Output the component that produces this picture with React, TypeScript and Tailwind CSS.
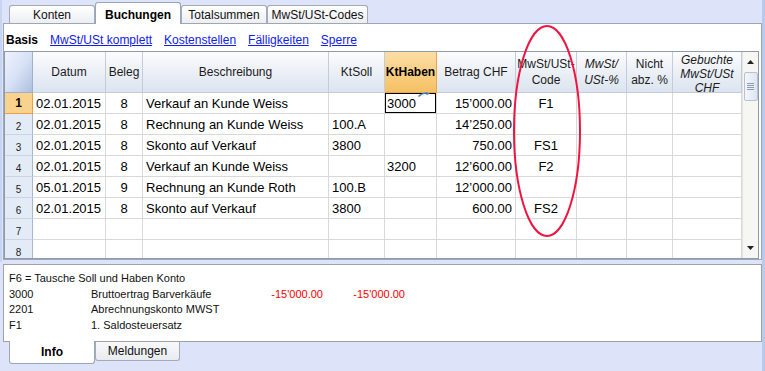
import React from 'react';

interface Row {
  n: number;
  datum: string;
  beleg: string;
  text: string;
  soll: string;
  haben: string;
  betrag: string;
  code: string;
}

const rows: Row[] = [
  { n: 1, datum: '02.01.2015', beleg: '8', text: 'Verkauf an Kunde Weiss', soll: '', haben: '3000', betrag: '15\u2019000.00', code: 'F1' },
  { n: 2, datum: '02.01.2015', beleg: '8', text: 'Rechnung an Kunde Weiss', soll: '100.A', haben: '', betrag: '14\u2019250.00', code: '' },
  { n: 3, datum: '02.01.2015', beleg: '8', text: 'Skonto auf Verkauf', soll: '3800', haben: '', betrag: '750.00', code: 'FS1' },
  { n: 4, datum: '02.01.2015', beleg: '8', text: 'Verkauf an Kunde Weiss', soll: '', haben: '3200', betrag: '12\u2019600.00', code: 'F2' },
  { n: 5, datum: '05.01.2015', beleg: '9', text: 'Rechnung an Kunde Roth', soll: '100.B', haben: '', betrag: '12\u2019000.00', code: '' },
  { n: 6, datum: '02.01.2015', beleg: '8', text: 'Skonto auf Verkauf', soll: '3800', haben: '', betrag: '600.00', code: 'FS2' },
  { n: 7, datum: '', beleg: '', text: '', soll: '', haben: '', betrag: '', code: '' },
  { n: 8, datum: '', beleg: '', text: '', soll: '', haben: '', betrag: '', code: '' },
];

const cell = 'h-[21px] border-r border-b border-[#d9d9d9] flex items-center text-[13px] leading-none whitespace-nowrap overflow-hidden text-black';
const head = 'h-[41px] border-r border-b border-[#c4ccd9] bg-gradient-to-b from-[#fbfcfe] to-[#dce4ef] flex items-center justify-center text-center text-[12px] leading-[16px] text-[#1b1b1b] overflow-hidden';

const TopTab: React.FC<{ label: string; active?: boolean; w: string }> = ({ label, active, w }) =>
  active ? (
    <div className={`${w} h-[22px] -mb-px relative z-10 border border-b-0 border-[#9aa5b5] rounded-t-[3px] bg-gradient-to-b from-[#fdfdfd] to-white flex items-center justify-center pt-[2px] text-[12px] font-bold`}>
      {label}
    </div>
  ) : (
    <div className={`${w} h-[18px] border border-b-0 border-[#a3abb8] rounded-t-[3px] bg-gradient-to-b from-white to-[#eceef2] flex items-center justify-center text-[12px] text-[#111]`}>
      {label}
    </div>
  );

const Scrollbar: React.FC = () => (
  <div className="w-[16px] bg-[#f6f6f3] border-l border-[#e4e4e0] flex flex-col items-center">
    <div className="h-[18px] w-full flex items-center justify-center pt-[2px]">
      <svg width="7" height="4" viewBox="0 0 7 4"><path d="M0 4 L3.5 0 L7 4 Z" fill="#222" /></svg>
    </div>
    <div className="w-[14px] h-[29px] mt-[2px] rounded-[2px] border border-[#b4c1d8] bg-gradient-to-r from-[#f4f6fb] to-[#dfe5f0] flex flex-col items-center justify-center gap-[1px]">
      <div className="w-[7px] h-px bg-[#8d9ab0]" />
      <div className="w-[7px] h-px bg-[#8d9ab0]" />
      <div className="w-[7px] h-px bg-[#8d9ab0]" />
      <div className="w-[7px] h-px bg-[#8d9ab0]" />
    </div>
    <div className="flex-1" />
    <div className="h-[16px] w-full flex items-center justify-center pb-[4px]">
      <svg width="7" height="4" viewBox="0 0 7 4"><path d="M0 0 L7 0 L3.5 4 Z" fill="#222" /></svg>
    </div>
  </div>
);

export default function App() {
  return (
    <div className="w-[765px] h-[371px] bg-[#dde4fa] relative overflow-hidden font-['Liberation_Sans',Arial,sans-serif]">
      <div className="absolute right-0 top-0 w-[3px] h-full bg-[#b6cbee]" />
      <div className="absolute left-0 top-0 w-[2px] h-[262px] bg-[#c8d5f2]" />

      <div className="pl-[3px] w-[762px]">
        {/* top tabs */}
        <div className="h-[23px] flex items-end pl-[6px]">
          <TopTab label="Konten" w="w-[86px]" />
          <TopTab label="Buchungen" active w="w-[86px]" />
          <TopTab label="Totalsummen" w="w-[86px]" />
          <TopTab label="MwSt/USt-Codes" w="w-[101px]" />
        </div>

        {/* main panel */}
        <div className="h-[237px] border border-[#9ca6b4] bg-white pr-[2px] flex flex-col">
          <div className="h-[27px] flex items-center pl-[2px] gap-[12px] text-[12px] pt-[4px]">
            <span className="font-bold">Basis</span>
            <span className="text-[#1020f0] underline">MwSt/USt komplett</span>
            <span className="text-[#1020f0] underline">Kostenstellen</span>
            <span className="text-[#1020f0] underline">Fälligkeiten</span>
            <span className="text-[#1020f0] underline">Sperre</span>
          </div>

          <div className="h-[208px] border border-[#8f9cb0] flex overflow-hidden">
            <div className="grid grid-cols-[28px_73px_37px_186px_56px_52px_79px_61px_50px_46px_69px] auto-rows-min h-[206px] overflow-hidden">
              {/* header */}
              <div className="h-[41px] border-r border-b border-[#9fb0cc] bg-gradient-to-br from-[#eef2fc] via-[#d8e2f6] to-[#aebfdd]" />
              <div className={head}>Datum</div>
              <div className={head}>Beleg</div>
              <div className={head}>Beschreibung</div>
              <div className={head}>KtSoll</div>
              <div className="h-[41px] border-r border-b border-[#eea640] bg-gradient-to-b from-[#fbdea6] to-[#f6c062] flex items-center justify-center text-[12px] font-bold">KtHaben</div>
              <div className={head}>Betrag CHF</div>
              <div className={head}>MwSt/USt-<br />Code</div>
              <div className={`${head} italic`}>MwSt/<br />USt-%</div>
              <div className={head}>Nicht<br />abz. %</div>
              <div className={`${head} italic !items-start pt-[1px] !leading-[14px]`}>Gebuchte<br />MwSt/USt<br />CHF</div>

              {rows.map((r) => (
                <React.Fragment key={r.n}>
                  {r.n === 1 ? (
                    <div className="h-[21px] border-r border-b border-[#e9a23c] bg-[#f9d28d] flex items-center justify-center text-[12px] font-bold">1</div>
                  ) : (
                    <div className="h-[21px] border-r border-b border-[#c9d4e6] border-r-[#a8b8d2] bg-[#e3ebf7] flex items-center justify-center text-[10px] text-[#222] pt-[4px]">{r.n}</div>
                  )}
                  <div className={`${cell} pl-[3px]`}>{r.datum}</div>
                  <div className={`${cell} justify-center`}>{r.beleg}</div>
                  <div className={`${cell} pl-[3px]`}>{r.text}</div>
                  <div className={`${cell} pl-[3px]`}>{r.soll}</div>
                  <div className={`${cell} pl-[2px] relative !overflow-visible`}>
                    {r.haben}
                    {r.n === 1 && (
                      <>
                        <span className="absolute inset-0 border-[1.5px] border-black" />
                        <svg className="absolute right-[6px] -top-[1px]" width="12" height="5" viewBox="0 0 12 5">
                          <path d="M0.5 4.5 Q4 0.8 9 1.2" fill="none" stroke="#2f7fd6" strokeWidth="1.4" />
                          <path d="M8 0 L12 1.4 L8.6 3.2 Z" fill="#2f7fd6" />
                        </svg>
                      </>
                    )}
                  </div>
                  <div className={`${cell} justify-end pr-[3px]`}>{r.betrag}</div>
                  <div className={`${cell} justify-center`}>{r.code}</div>
                  <div className={cell} />
                  <div className={cell} />
                  <div className={cell} />
                </React.Fragment>
              ))}
            </div>
            <Scrollbar />
          </div>
        </div>

        {/* info panel */}
        <div className="mt-[4px] h-[78px] border border-[#a2a2a2] bg-white pl-[5px] pt-[6px] text-[11px] leading-[15.5px] text-[#111]">
          <div>F6 = Tausche Soll und Haben Konto</div>
          <div className="grid grid-cols-[82px_150px_82px_82px]">
            <span>3000</span>
            <span>Bruttoertrag Barverkäufe</span>
            <span className="text-right text-[#ff0000]">-15&apos;000.00</span>
            <span className="text-right text-[#ff0000]">-15&apos;000.00</span>
            <span>2201</span>
            <span>Abrechnungskonto MWST</span>
            <span />
            <span />
            <span>F1</span>
            <span>1. Saldosteuersatz</span>
            <span />
            <span />
          </div>
        </div>

        {/* bottom tabs */}
        <div className="flex items-start pl-[6px]">
          <div className="w-[86px] h-[23px] -mt-px relative z-10 border border-t-0 border-[#9aa5b5] rounded-b-[3px] bg-white flex items-center justify-center text-[12px] font-bold">
            Info
          </div>
          <div className="w-[85px] h-[19px] border border-t-0 border-[#a3abb8] rounded-b-[3px] bg-gradient-to-b from-[#f8f9fb] to-[#e9ebf0] flex items-center justify-center text-[12px] text-[#111]">
            Meldungen
          </div>
        </div>
      </div>

      {/* red annotation ellipse */}
      <svg className="absolute left-[512px] top-[24px]" width="70" height="214" viewBox="0 0 70 214">
        <ellipse cx="35" cy="107" rx="33" ry="105" fill="none" stroke="#f01540" strokeWidth="2" />
      </svg>
    </div>
  );
}
